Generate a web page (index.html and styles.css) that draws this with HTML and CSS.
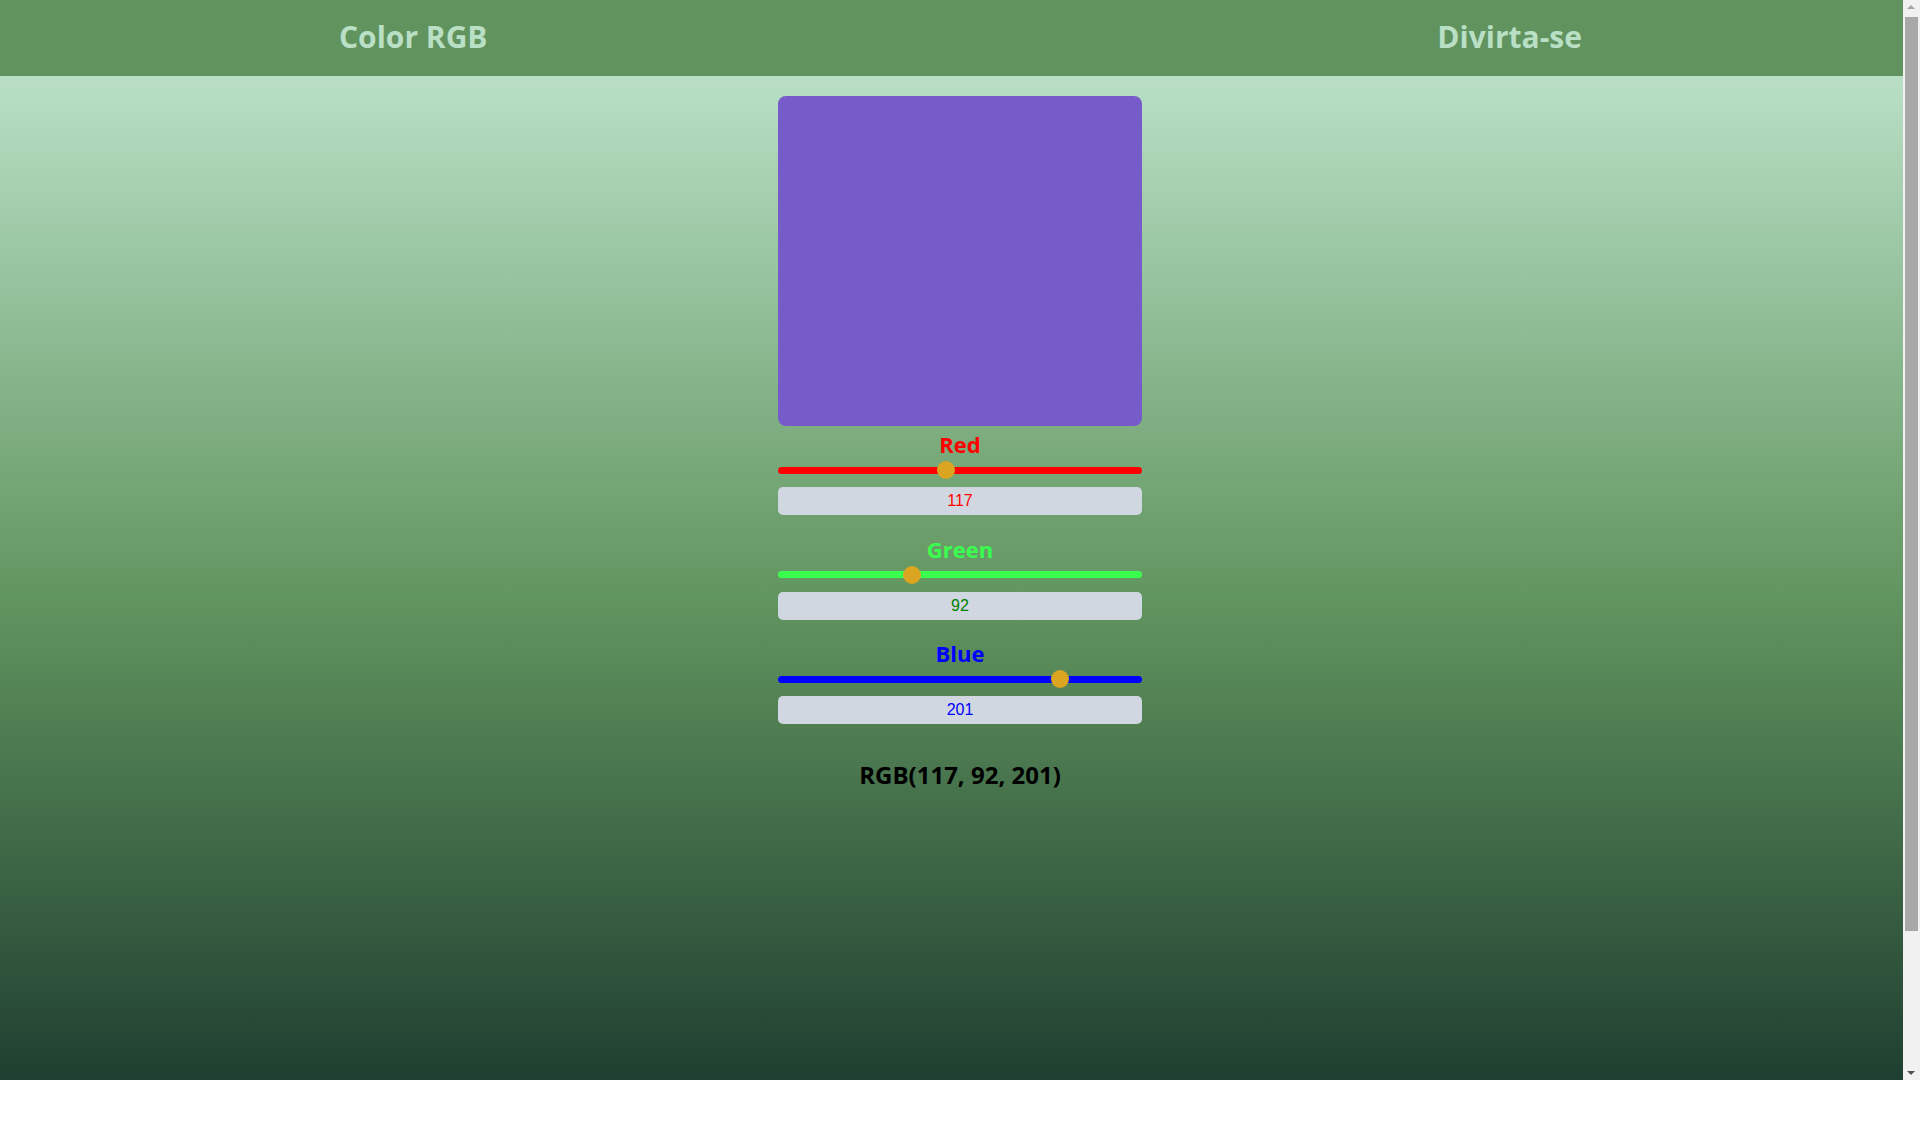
FILE: index.html
```html
<!DOCTYPE html>
<html lang="pt">
<head>
<meta charset="utf-8">
<title>Color RGB</title>
<link rel="stylesheet" href="styles.css">
</head>
<body>
<div class="app">
  <header class="topbar">
    <h1 class="brand">Color RGB</h1>
    <h2 class="brand">Divirta-se</h2>
  </header>
  <main class="main">
    <section class="mixer">
      <div class="swatch"></div>
      <div class="channel">
        <label class="channel-label red-text" for="r">Red</label>
        <input class="slider slider-red" id="r" type="range" min="0" max="255" value="117">
        <input class="value value-red" type="text" value="117" readonly>
      </div>
      <div class="channel">
        <label class="channel-label green-text" for="g">Green</label>
        <input class="slider slider-green" id="g" type="range" min="0" max="255" value="92">
        <input class="value value-green" type="text" value="92" readonly>
      </div>
      <div class="channel">
        <label class="channel-label blue-text" for="b">Blue</label>
        <input class="slider slider-blue" id="b" type="range" min="0" max="255" value="201">
        <input class="value value-blue" type="text" value="201" readonly>
      </div>
      <p class="result">RGB(117, 92, 201)</p>
    </section>
  </main>
  <div class="scrollbar">
    <span class="arrow arrow-up"></span>
    <span class="thumb"></span>
    <span class="arrow arrow-down"></span>
  </div>
</div>
</body>
</html>
```

FILE: styles.css
```css
* { box-sizing: border-box; }

html, body {
  margin: 0;
  padding: 0;
  background: #ffffff;
}

body {
  font-family: "Open Sans", "Noto Sans", sans-serif;
}

.app {
  position: relative;
  width: 1920px;
  height: 1080px;
  overflow: hidden;
  display: flex;
  flex-direction: column;
}

.topbar {
  height: 76px;
  flex: 0 0 76px;
  background: #61935f;
  display: flex;
  justify-content: space-between;
  align-items: center;
  padding: 0 338px 3px 339px;
}

.brand {
  margin: 0;
  font-size: 30px;
  font-weight: 700;
  color: #b9dfc5;
}

.main {
  flex: 1 1 auto;
  background: linear-gradient(to bottom, #b9e0c6 0%, #61955f 52%, #1f3f30 100%);
}

.mixer {
  width: 364px;
  margin: 0 auto;
  padding-top: 20px;
  display: flex;
  flex-direction: column;
}

.swatch {
  height: 330px;
  border-radius: 8px;
  background: rgb(117, 92, 201);
}

.channel {
  display: flex;
  flex-direction: column;
  margin-top: 3px;
  margin-bottom: 15.5px;
}

.channel-label {
  text-align: center;
  font-size: 22px;
  font-weight: 700;
  line-height: 30px;
}

.red-text { color: #ff0000; }
.green-text { color: #3bff4f; }
.blue-text { color: #0000ff; }

.slider {
  -webkit-appearance: none;
  appearance: none;
  width: 364px;
  height: 18px;
  margin: 2px 0 0 0;
  padding: 0;
  background: transparent;
}

.slider::-webkit-slider-runnable-track {
  height: 7px;
  border-radius: 4px;
  border: none;
}

.slider::-webkit-slider-thumb {
  -webkit-appearance: none;
  appearance: none;
  width: 18px;
  height: 18px;
  border-radius: 50%;
  border: none;
  background: #daa520;
  margin-top: -5.5px;
}

.slider-red::-webkit-slider-runnable-track { background: #ff0000; }
.slider-green::-webkit-slider-runnable-track { background: #3bff4f; }
.slider-blue::-webkit-slider-runnable-track { background: #0000ff; }

.value {
  margin-top: 8px;
  width: 364px;
  height: 28px;
  border: none;
  border-radius: 5px;
  background: #d1d7e0;
  text-align: center;
  font-family: "Liberation Sans", Arial, sans-serif;
  font-size: 16px;
  padding: 0;
  outline: none;
}

.value-red { color: #ff0000; }
.value-green { color: #008000; }
.value-blue { color: #0000ff; }

.result {
  margin: 18px 0 0 0;
  text-align: center;
  font-size: 24px;
  font-weight: 700;
  color: #000000;
}

.scrollbar {
  position: absolute;
  top: 0;
  right: 0;
  width: 17px;
  height: 1080px;
  background: #f1f1f1;
}

.thumb {
  position: absolute;
  left: 2px;
  top: 17px;
  width: 13px;
  height: 914px;
  background: #a8a8a8;
}

.arrow {
  position: absolute;
  left: 4px;
  width: 0;
  height: 0;
  border-left: 4.5px solid transparent;
  border-right: 4.5px solid transparent;
}

.arrow-up {
  top: 5px;
  border-bottom: 4px solid #a3a3a3;
}

.arrow-down {
  bottom: 5px;
  border-top: 4px solid #505050;
}
```
